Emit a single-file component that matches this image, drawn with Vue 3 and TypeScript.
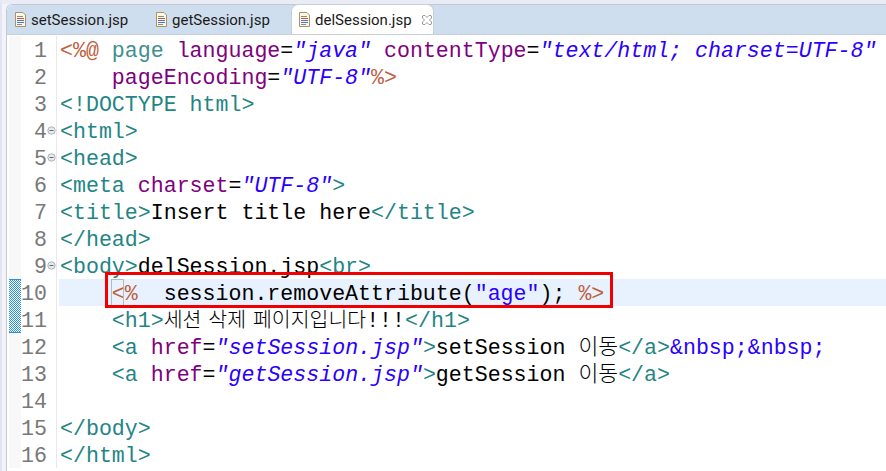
<script setup lang="ts">
type Kind = 'tag' | 'attr' | 'val' | 'val2' | 'jsp' | 'txt' | 'kw' | 'ko' | 'ko2'
interface Seg { k: Kind; t: string }
interface Line { n: number; fold?: boolean; cur?: boolean; segs: Seg[] }
const s = (k: Kind, t: string): Seg => ({ k, t })
const lines: Line[] = [
  { n: 1, segs: [s('jsp', '<%@ '), s('kw', 'page '), s('attr', 'language'), s('txt', '='), s('val', '"java"'), s('txt', ' '), s('attr', 'contentType'), s('txt', '='), s('val', '"text/html; charset=UTF-8"')] },
  { n: 2, segs: [s('txt', '    '), s('attr', 'pageEncoding'), s('txt', '='), s('val', '"UTF-8"'), s('jsp', '%>')] },
  { n: 3, segs: [s('tag', '<!DOCTYPE html>')] },
  { n: 4, fold: true, segs: [s('tag', '<html>')] },
  { n: 5, fold: true, segs: [s('tag', '<head>')] },
  { n: 6, segs: [s('tag', '<meta '), s('attr', 'charset'), s('txt', '='), s('val', '"UTF-8"'), s('tag', '>')] },
  { n: 7, segs: [s('tag', '<title>'), s('txt', 'Insert title here'), s('tag', '</title>')] },
  { n: 8, segs: [s('tag', '</head>')] },
  { n: 9, fold: true, segs: [s('tag', '<body>'), s('txt', 'delSession.jsp'), s('tag', '<br>')] },
  { n: 10, cur: true, segs: [s('txt', '    '), s('jsp', '<%'), s('txt', '  session.removeAttribute('), s('val2', '"age"'), s('txt', '); '), s('jsp', '%>')] },
  { n: 11, segs: [s('txt', '    '), s('tag', '<h1>'), s('ko', '세션 삭제 페이지입니다'), s('txt', '!!!'), s('tag', '</h1>')] },
  { n: 12, segs: [s('txt', '    '), s('tag', '<a '), s('attr', 'href'), s('txt', '='), s('val', '"setSession.jsp"'), s('tag', '>'), s('txt', 'setSession '), s('ko2', '이동'), s('tag', '</a>'), s('val2', '&nbsp;&nbsp;')] },
  { n: 13, segs: [s('txt', '    '), s('tag', '<a '), s('attr', 'href'), s('txt', '='), s('val', '"getSession.jsp"'), s('tag', '>'), s('txt', 'getSession '), s('ko2', '이동'), s('tag', '</a>')] },
  { n: 14, segs: [] },
  { n: 15, segs: [s('tag', '</body>')] },
  { n: 16, segs: [s('tag', '</html>')] },
]
const tabs = [
  { name: 'setSession.jsp', active: false },
  { name: 'getSession.jsp', active: false },
  { name: 'delSession.jsp', active: true },
]
</script>

<template>
  <div class="page">
    <div class="pane">
      <div class="tabbar">
        <div v-for="tab in tabs" :key="tab.name" class="tab" :class="{ active: tab.active }">
          <svg class="file" width="13" height="15" viewBox="0 0 13 15">
            <path d="M1.5 .5H9L11.5 3V14.5H1.5Z" fill="#fbf6e6" stroke="#a8946a" />
            <path d="M3 4.5H9" stroke="#8a8a8a" />
            <path d="M3 6.5H10" stroke="#c0504d" />
            <path d="M3 8.5H10" stroke="#4a78c0" />
            <path d="M3 10.5H10" stroke="#4a78c0" />
            <path d="M3 12.5H8" stroke="#8a8a8a" />
          </svg>
          <span class="tabname">{{ tab.name }}</span>
          <svg v-if="tab.active" class="close" width="10" height="10" viewBox="0 0 10 10">
            <path d="M1 .5H3L5 2.5L7 .5H9L9.5 1V3L7.5 5L9.5 7V9L9 9.5H7L5 7.5L3 9.5H1L.5 9V7L2.5 5L.5 3V1Z" fill="#fff" stroke="#9a9a9a" />
          </svg>
        </div>
      </div>
      <div class="editor">
        <div class="code">
          <div v-for="l in lines" :key="l.n" class="row">
            <div class="marker" />
            <div class="num">{{ l.n }}</div>
            <div class="foldcol">
              <svg v-if="l.fold" width="9" height="9" viewBox="0 0 9 9">
                <circle cx="4.5" cy="4.5" r="3.7" fill="#e6eaee" stroke="#a9b3bb" />
                <path d="M2.5 4.5H6.5" stroke="#5f6b75" />
              </svg>
            </div>
            <div class="sep" />
            <div class="text" :class="{ cur: l.cur }">
              <span v-for="(g, i) in l.segs" :key="i" :class="g.k">{{ g.t }}</span>
            </div>
          </div>
          <svg class="diff" width="12" height="54" viewBox="0 0 12 54" shape-rendering="crispEdges">
            <defs>
              <pattern id="dither" width="2" height="2" patternUnits="userSpaceOnUse">
                <rect width="2" height="2" fill="#fff" />
                <rect width="1" height="1" fill="#2b8fe0" />
                <rect x="1" y="1" width="1" height="1" fill="#2b8fe0" />
              </pattern>
            </defs>
            <rect width="12" height="54" fill="url(#dither)" />
            <rect width="12" height="1" fill="#2b8fe0" />
            <rect y="53" width="12" height="1" fill="#2b8fe0" />
          </svg>
          <div class="bracket" />
          <div class="redbox" />
        </div>
      </div>
    </div>
  </div>
</template>

<style scoped>
.page {
  width: 886px;
  height: 471px;
  background: #f3f4fa;
  border-left: 2px solid #e3e6f2;
  border-top: 4px solid #e9ebf5;
  padding-left: 4px;
  box-sizing: border-box;
  overflow: hidden;
}
.pane {
  height: 467px;
  background: #fff;
  border-top: 1px solid #c3c9d2;
  border-left: 1px solid #c3c9d2;
  border-top-left-radius: 6px;
  box-sizing: border-box;
  display: flex;
  flex-direction: column;
}
.tabbar {
  height: 29px;
  flex: none;
  display: flex;
  background: #cfdeee;
  border-bottom: 1px solid #c6d0da;
  border-top-left-radius: 6px;
}
.tab {
  display: flex;
  align-items: center;
  height: 29px;
  padding-left: 7px;
  width: 141px;
  box-sizing: border-box;
  font-family: Roboto, "Open Sans", sans-serif;
  font-size: 15px;
  color: #1a1a1a;
}
.tab.active {
  width: 143px;
  background: #fff;
  margin-left: 2px;
  padding-left: 6px;
  height: 30px;
  border: 1px solid #c6d0da;
  border-bottom: none;
  border-radius: 7px 7px 0 0;
  margin-top: -1px;
  position: relative;
}
.file {
  flex: none;
  margin-right: 4px;
}
.close {
  margin-left: 10px;
}
.editor {
  flex: 1;
  min-height: 0;
  display: flex;
  padding-top: 1px;
}
.code {
  position: relative;
  flex: 1;
  min-width: 0;
}
.row {
  display: flex;
  height: 27px;
  line-height: 31px;
  font-family: "Liberation Mono", "Noto Sans CJK KR", monospace;
  font-size: 21.6px;
}
.marker {
  width: 12px;
  flex: none;
  background: #f8f8f8;
  margin-left: 2px;
}
.num {
  width: 26px;
  flex: none;
  color: #787878;
  text-align: right;
}
.foldcol {
  width: 9px;
  flex: none;
  display: flex;
  align-items: center;
  justify-content: center;
}
.sep {
  width: 1px;
  flex: none;
  background: #e8e8e8;
  margin-right: 2px;
}
.text {
  flex: 1;
  min-width: 0;
  padding-left: 1px;
  white-space: pre;
  color: #000;
}
.text.cur {
  background: #e8f2fe;
}
.tag { color: #1f8585; }
.kw { color: #3f8f8f; }
.attr { color: #7f007f; }
.val { color: #2a00ff; font-style: italic; }
.val2 { color: #2a00ff; }
.jsp { color: #bf5f3f; }
.ko,
.ko2 {
  font-family: "Noto Sans CJK KR", sans-serif;
  font-weight: 300;
  line-height: 0;
}
.ko {
  font-size: 20.5px;
  word-spacing: 2.4px;
}
.ko2 {
  font-size: 21.6px;
}
.diff {
  position: absolute;
  left: 2px;
  top: 243px;
}
.bracket {
  position: absolute;
  left: 104px;
  top: 243px;
  width: 13px;
  height: 27px;
  border: 1px solid #b8b8b8;
  box-sizing: border-box;
}
.redbox {
  position: absolute;
  left: 98px;
  top: 236px;
  width: 508px;
  height: 36px;
  border: 3px solid #f00000;
  box-sizing: border-box;
}
</style>
